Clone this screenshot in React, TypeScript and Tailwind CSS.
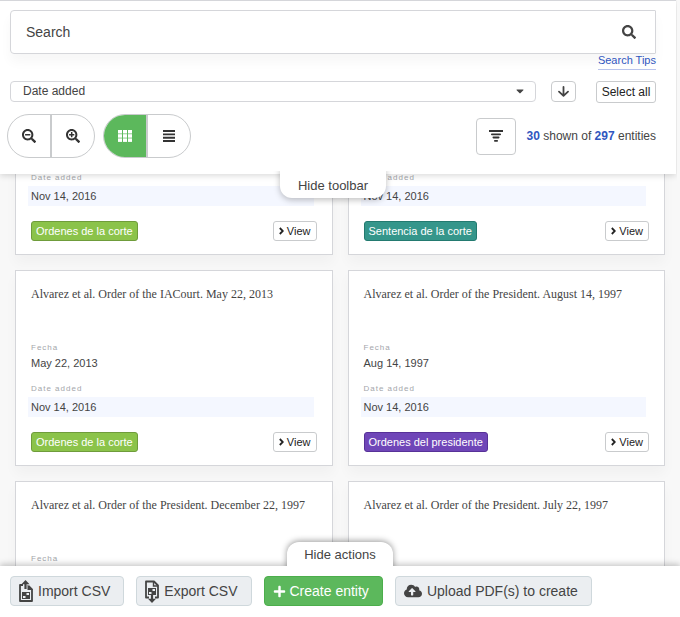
import React from "react";
import { FaCaretDown, FaCloudUploadAlt, FaPlus, FaSearch, FaSearchMinus, FaSearchPlus } from "react-icons/fa";

type Entity = { title: string; fecha: string; added: string; template: string; color: string };

const green = "bg-[#8bc34a] border-[#6f9c3b]";
const teal = "bg-[#35968b] border-[#237a70]";
const purple = "bg-[#6f46b8] border-[#573198]";

const entities: Entity[] = [
  { title: "Alvarez et al. Order of the IACourt. August 11, 1997", fecha: "Aug 11, 1997", added: "Nov 14, 2016", template: "Ordenes de la corte", color: green },
  { title: "Alvarez et al. Judgment of the IACourt", fecha: "Jul 22, 1997", added: "Nov 14, 2016", template: "Sentencia de la corte", color: teal },
  { title: "Alvarez et al. Order of the IACourt. May 22, 2013", fecha: "May 22, 2013", added: "Nov 14, 2016", template: "Ordenes de la corte", color: green },
  { title: "Alvarez et al. Order of the President. August 14, 1997", fecha: "Aug 14, 1997", added: "Nov 14, 2016", template: "Ordenes del presidente", color: purple },
  { title: "Alvarez et al. Order of the President. December 22, 1997", fecha: "Dec 22, 1997", added: "Nov 14, 2016", template: "Ordenes del presidente", color: purple },
  { title: "Alvarez et al. Order of the President. July 22, 1997", fecha: "Jul 22, 1997", added: "Nov 14, 2016", template: "Ordenes del presidente", color: purple },
];

function GridIcon() {
  return (
    <svg width="14" height="12" viewBox="0 0 14 12" fill="currentColor" aria-hidden="true">
      {[0, 5, 10].map((x) => [0, 4.2, 8.4].map((y) => <rect key={`${x}-${y}`} x={x} y={y} width="4" height="3.5" />))}
    </svg>
  );
}

function RowsIcon() {
  return (
    <svg width="12" height="12" viewBox="0 0 12 12" fill="currentColor" aria-hidden="true">
      <path d="M0 0h12v1.9H0zM0 3.4h12v1.9H0zM0 6.8h12v1.9H0zM0 10.1h12V12H0z" />
    </svg>
  );
}

function FilterIcon() {
  return (
    <svg width="14" height="12" viewBox="0 0 14 12" fill="currentColor" aria-hidden="true">
      <path d="M0 0h14v2H0z" />
      <rect x="2" y="3.4" width="10" height="1.8" rx=".8" />
      <rect x="3.5" y="6.6" width="7" height="1.8" rx=".8" />
      <rect x="5" y="10" width="4" height="1.8" rx=".8" />
    </svg>
  );
}

function DownIcon() {
  return (
    <svg width="11" height="11" viewBox="0 0 11 11" fill="none" stroke="currentColor" strokeWidth="1.8" strokeLinecap="round" strokeLinejoin="round" aria-hidden="true">
      <path d="M5.5 1v8.6M1 5.6l4.5 4.2L10 5.6" />
    </svg>
  );
}

function ChevronIcon() {
  return (
    <svg width="5" height="8" viewBox="0 0 5 8" fill="none" stroke="currentColor" strokeWidth="1.8" aria-hidden="true">
      <path d="M.8 1l3 3-3 3" />
    </svg>
  );
}

function SheetCells({ y }: { y: number }) {
  return (
    <>
      <rect x="3" y={y} width="8" height="7" fill="currentColor" />
      <path d={`M4 ${y + 4}h2.5v2H4zM7.5 ${y + 1}H10v2H7.5z`} fill="#ebeef1" />
    </>
  );
}

function ImportIcon() {
  return (
    <svg width="14" height="23" viewBox="0 0 14 23" fill="none" aria-hidden="true">
      <path d="M4 5H1v16h12V9.5L9.5 6" stroke="currentColor" strokeWidth="1.8" strokeLinejoin="round" />
      <path d="M8.5 4.5L14 10H8.5z" fill="currentColor" />
      <path d="M6.5 0l4 4.2H7.6V9H5.4V4.2H2.5z" fill="currentColor" />
      <SheetCells y={12} />
    </svg>
  );
}

function ExportIcon() {
  return (
    <svg width="14" height="23" viewBox="0 0 14 23" fill="none" aria-hidden="true">
      <path d="M4 17.5H1V1.5h8l4 4v12h-3" stroke="currentColor" strokeWidth="1.8" strokeLinejoin="round" />
      <path d="M8.5 1.5v4.5H13" stroke="currentColor" strokeWidth="1.4" />
      <path d="M7 23l-4-4.2h2.9V15h2.2v3.8H11z" fill="currentColor" />
      <SheetCells y={8} />
    </svg>
  );
}

function EntityCard({ entity }: { entity: Entity }) {
  return (
    <article className="flex h-[196px] flex-col border border-[#d5d6da] bg-white px-[15px] pt-[15px] shadow-[0_8px_12px_rgba(0,0,0,0.03)]">
      <h2 className="h-[55px] font-['Liberation_Serif',serif] text-[12px] leading-4">{entity.title}</h2>
      <dl className="text-[11px]">
        <dt className="text-[8px] leading-[14px] tracking-[1px] text-[#a4a6ab]">Fecha</dt>
        <dd className="leading-[16px]">{entity.fecha}</dd>
        <dt className="mt-[11px] text-[8px] leading-[14px] tracking-[1px] text-[#a4a6ab]">Date added</dt>
        <dd className="-ml-[3px] mr-[3px] mt-px bg-[#f4f7ff] pl-[3px] leading-5">{entity.added}</dd>
      </dl>
      <div className="mt-[15px] flex items-center justify-between text-[11px] leading-[18px]">
        <span className={`rounded-[3px] border px-1 text-white ${entity.color}`}>{entity.template}</span>
        <button type="button" className="flex items-center gap-[3px] rounded-[3px] border border-[#c9cbcd] bg-white px-[5px] text-[#222]">
          <ChevronIcon />
          View
        </button>
      </div>
    </article>
  );
}

function Toolbar() {
  return (
    <header className="relative z-10 mr-1 h-[174px] border-t border-[#d5d6da] bg-white pl-[10px] pr-5 pt-[9px] shadow-[0_2px_6px_rgba(0,0,0,0.14)] [clip-path:inset(0_-1px_-40px_0)]">
      <form role="search" className="flex h-11 items-center rounded-l-[4px] rounded-r-[1px] border border-[#d5d6da] pl-[15px] pr-[19px] shadow-[0_8px_12px_rgba(0,0,0,0.035)]">
        <input type="text" aria-label="Search" placeholder="Search" className="min-w-0 flex-1 text-[14px] outline-none placeholder:text-[#444]" />
        <button type="button" aria-label="Run search">
          <FaSearch size={14} />
        </button>
      </form>
      <div className="flex justify-end">
        <a href="#tips" className="border-b border-[#b9c4ec] pb-[2px] text-[11px] leading-[13px] text-[#3056bf]">Search Tips</a>
      </div>
      <div className="mt-[11px] flex items-start">
        <div className="relative flex-1">
          <select aria-label="Sort by" className="block h-[21px] w-full appearance-none rounded-[4px] border border-[#d5d6da] bg-white pl-3 text-[12px] leading-[19px] outline-none">
            <option>Date added</option>
          </select>
          <FaCaretDown size={12} className="pointer-events-none absolute right-[10px] top-1" aria-hidden="true" />
        </div>
        <button type="button" aria-label="Sort descending" className="ml-[15px] flex h-[21px] w-[25px] items-center justify-center rounded-[4px] border border-[#c9cbcd]">
          <DownIcon />
        </button>
        <button type="button" className="ml-5 h-[22px] w-[60px] rounded-[3px] border border-[#c9cbcd] text-[12px] leading-5 whitespace-nowrap text-[#222]">Select all</button>
      </div>
      <div className="-ml-[3px] mt-[11px] flex h-11 items-center text-[#333]">
        <div className="flex h-11 w-[88px] overflow-hidden rounded-full border border-[#c9cbcd]">
          <button type="button" aria-label="Zoom out" className="flex flex-1 items-center justify-center border-r-2 border-[#c9cbcd]"><FaSearchMinus size={14} /></button>
          <button type="button" aria-label="Zoom in" className="flex flex-1 items-center justify-center"><FaSearchPlus size={14} /></button>
        </div>
        <div className="ml-2 flex h-11 w-[88px] overflow-hidden rounded-full border border-[#c9cbcd]">
          <button type="button" aria-label="Cards view" className="flex flex-1 items-center justify-center border-r-2 border-[#c9cbcd] bg-[#5cb85c] text-white"><GridIcon /></button>
          <button type="button" aria-label="List view" className="flex flex-1 items-center justify-center"><RowsIcon /></button>
        </div>
        <button type="button" aria-label="Filters" className="ml-auto flex h-[37px] w-10 items-center justify-center rounded-[4px] border border-[#c9cbcd]"><FilterIcon /></button>
        <p className="ml-[11px] text-[12px] leading-4 text-[#444]">
          <b className="text-[#3056bf]">30</b> shown of <b className="text-[#3056bf]">297</b> entities
        </p>
      </div>
      <div className="mt-[9px] flex justify-center">
        <button type="button" className="h-[31px] rounded-b-[12px] bg-white px-[18px] pt-[6px] text-[13px] shadow-[0_2px_6px_rgba(0,0,0,0.25)] [clip-path:inset(4px_-8px_-8px_-8px)]">Hide toolbar</button>
      </div>
    </header>
  );
}

function Actions() {
  const plain = "flex h-[30px] items-center rounded-[4px] border border-[#cfd8dc] bg-[#ebeef1]";
  return (
    <footer className="relative z-10 bg-white px-[10px] pb-[11px] pt-[10px] shadow-[0_-2px_6px_rgba(0,0,0,0.22)]">
      <div className="absolute inset-x-0 -top-6 flex justify-center">
        <button type="button" className="h-[30px] rounded-t-[12px] bg-white px-[17px] pb-1 text-[13px] shadow-[0_-1px_6px_rgba(0,0,0,0.4)] [clip-path:inset(-8px_-8px_6px_-8px)]">Hide actions</button>
      </div>
      <div className="flex gap-3 text-[14px]">
        <button type="button" className={`${plain} gap-[5px] pl-2 pr-[13px]`}><ImportIcon />Import CSV</button>
        <button type="button" className={`${plain} gap-[5px] pl-2 pr-[13px]`}><ExportIcon />Export CSV</button>
        <button type="button" className="flex h-[30px] items-center gap-1 rounded-[4px] border border-[#4cae4c] bg-[#5cb85c] pl-2 pr-[13px] text-white"><FaPlus size={13} aria-hidden="true" />Create entity</button>
        <button type="button" className={`${plain} gap-[5px] pl-2 pr-[13px]`}><FaCloudUploadAlt size={18} aria-hidden="true" />Upload PDF(s) to create</button>
      </div>
    </footer>
  );
}

export default function App() {
  return (
    <div className="flex h-screen flex-col overflow-hidden bg-[#f8f8f8] font-['Liberation_Sans',Arial,sans-serif] text-[#444]">
      <Toolbar />
      <main className="-mt-[115px] min-h-0 flex-1 overflow-hidden px-[15px]">
        <div className="grid grid-cols-2 gap-[15px]">
          {entities.map((entity) => <EntityCard key={entity.title} entity={entity} />)}
        </div>
      </main>
      <Actions />
    </div>
  );
}
